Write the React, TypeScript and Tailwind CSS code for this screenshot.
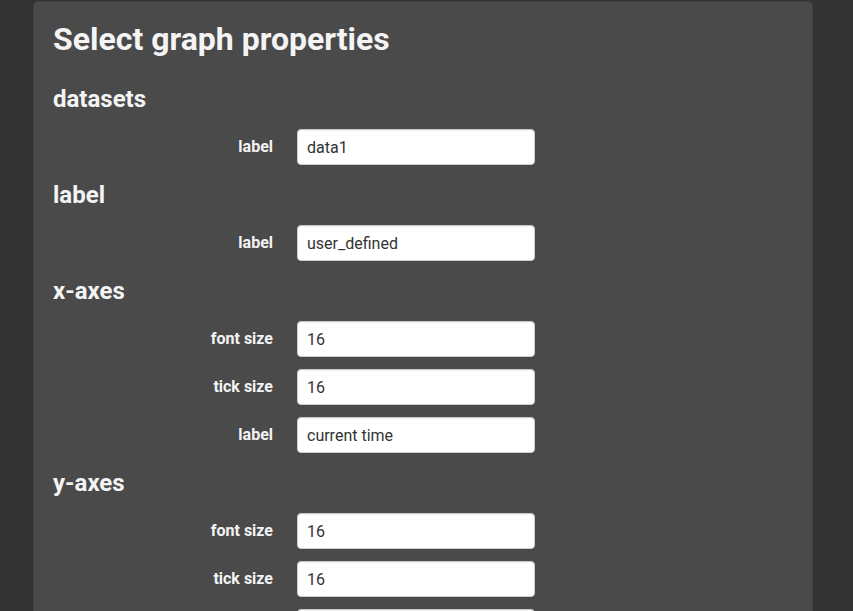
import React from "react";

type Row = { label: string; value: string };
type Section = { title: string; rows: Row[] };

const sections: Section[] = [
  { title: "datasets", rows: [{ label: "label", value: "data1" }] },
  { title: "label", rows: [{ label: "label", value: "user_defined" }] },
  {
    title: "x-axes",
    rows: [
      { label: "font size", value: "16" },
      { label: "tick size", value: "16" },
      { label: "label", value: "current time" },
    ],
  },
  {
    title: "y-axes",
    rows: [
      { label: "font size", value: "16" },
      { label: "tick size", value: "16" },
      { label: "label", value: "" },
    ],
  },
];

export default function App() {
  return (
    <div
      className="h-[611px] overflow-hidden bg-[#333333] pt-px"
      style={{ fontFamily: "Roboto, 'Liberation Sans', sans-serif" }}
    >
      <div className="ml-[33px] flex w-[780px] flex-col rounded-[5px] border border-[#3f3f3f] bg-[#4a4a4a] px-[19px] pt-[15px] pb-10">
        <h1 className="mb-[26px] text-[32px] font-bold leading-[44px] text-[#f4f4f4]">
          Select graph properties
        </h1>
        <div className="flex flex-col gap-[18px]">
          {sections.map((s) => (
            <div key={s.title} className="flex flex-col">
              <h3 className="mb-[18px] text-[24px] font-bold leading-6 text-[#f4f4f4]">
                {s.title}
              </h3>
              <div className="flex flex-col gap-3">
                {s.rows.map((r, i) => (
                  <div key={i} className="flex items-center gap-6">
                    <label className="w-[220px] text-right text-[16px] font-bold text-[#f4f4f4]">
                      {r.label}
                    </label>
                    <input
                      readOnly
                      value={r.value}
                      className="h-9 w-[238px] rounded-[4px] border border-[#cccccc] bg-white px-[9px] text-[16px] text-[#333333] shadow-[inset_0_1px_1px_rgba(0,0,0,0.075)] outline-none"
                    />
                  </div>
                ))}
              </div>
            </div>
          ))}
        </div>
      </div>
    </div>
  );
}
